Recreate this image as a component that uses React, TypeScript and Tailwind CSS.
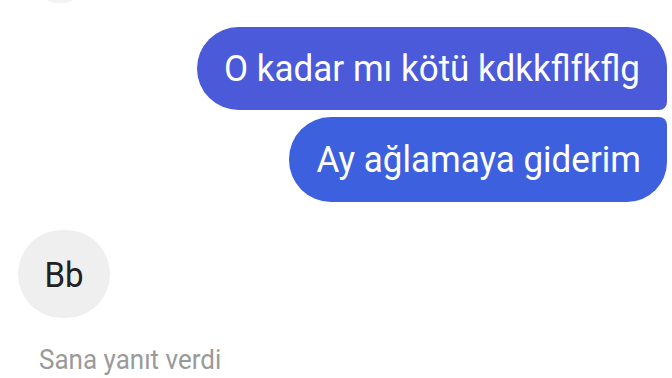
export default function App() {
  return (
    <div className="relative w-[672px] h-[378px] overflow-hidden bg-white" style={{ fontFamily: 'Roboto, "Noto Sans", sans-serif' }}>
      {/* önceki balonun alt kenarı */}
      <div className="absolute left-[40px] top-[-30px] w-[40px] h-[33px] rounded-full bg-[#f4f4f4]" />

      <div className="flex flex-col items-end pt-[27px] pr-[5px] gap-[7px]">
        <div className="h-[83px] flex items-center pl-[27px] pr-[27px] rounded-l-[42px] rounded-tr-[40px] rounded-br-[8px] bg-[#4a5ad9] text-white text-[35px] leading-none">
          <span className="inline-block scale-y-[1.08]">O kadar mı kötü kdkkflfkflg</span>
        </div>
        <div className="h-[85px] flex items-center pl-[28px] pr-[26px] rounded-l-[42px] rounded-tr-[8px] rounded-br-[40px] bg-[#3d61de] text-white text-[35px] leading-none">
          <span className="inline-block scale-y-[1.08]">Ay ağlamaya giderim</span>
        </div>
      </div>

      <div className="pl-[18px] pt-[28px]">
        <div className="w-[92px] h-[88px] rounded-[44px] bg-[#efefef] flex items-center justify-center text-[33px] leading-none text-[#222]">
          <span className="inline-block scale-y-[1.08]">Bb</span>
        </div>
        <p className="pl-[21px] pt-[28px] text-[26px] leading-none text-[#9a9a9a]">
          <span className="inline-block scale-y-[1.06]">Sana yanıt verdi</span>
        </p>
      </div>
    </div>
  )
}
